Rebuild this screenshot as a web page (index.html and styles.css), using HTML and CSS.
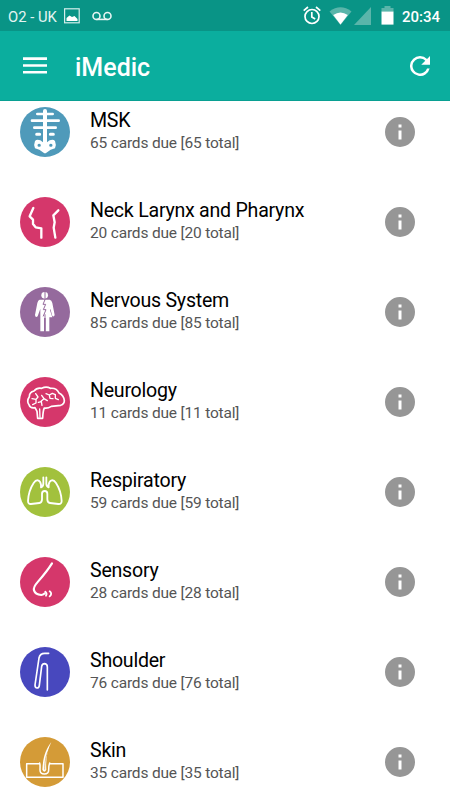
FILE: index.html
```html
<!DOCTYPE html>
<html lang="en">
<head>
    <meta charset="UTF-8">
    <meta name="viewport" content="width=device-width, initial-scale=1.0">
    <title>iMedic</title>
    <link rel="stylesheet" href="styles.css">
</head>
<body>
    <div class="status-bar">
        <span class="carrier">O2 - UK</span>
        <svg class="picture" width="16" height="16" viewBox="0 0 16 16">
            <rect x="0.6" y="0.8" width="14.6" height="14" fill="none" stroke="#d5eeeb" stroke-width="1.2"/>
            <path d="M2.5 13V10L5.5 7.5L8 9L10.5 8L13.5 11V13Z" fill="#fff"/>
        </svg>
        <svg class="voicemail" width="20" height="10" viewBox="0 0 20 10">
            <path d="M4.5 8.4H15.5" stroke="#e6f5f3" stroke-width="1.6"/>
            <circle cx="4.5" cy="5" r="3.5" fill="none" stroke="#e6f5f3" stroke-width="1.6"/>
            <circle cx="15.5" cy="5" r="3.5" fill="none" stroke="#e6f5f3" stroke-width="1.6"/>
        </svg>
        <svg class="alarm" width="18" height="19" viewBox="0 0 18 19">
            <g fill="none" stroke="#fff" stroke-width="1.7">
                <circle cx="9" cy="10.5" r="7"/>
                <path d="M0.7 4.6L5 1M17.3 4.6L13 1M8.8 6V11L12.2 13"/>
            </g>
        </svg>
        <svg class="wifi" width="23" height="18" viewBox="0 0 23 18">
            <path d="M0.5 4.5Q11.5 -3.8 22.5 4.5L11.5 18Z" fill="#5ab5aa"/>
            <path d="M4.2 8Q11.5 2.8 18.8 8L11.5 17.6Z" fill="#fff"/>
        </svg>
        <svg class="signal" width="17" height="18" viewBox="0 0 17 18">
            <path d="M17 0V18H0Z" fill="#5ab5aa"/>
        </svg>
        <svg class="battery" width="13" height="19" viewBox="0 0 13 19">
            <path d="M0.5 2H3.5V0H9.5V2H12.5V6H0.5Z" fill="#5ab5aa"/>
            <rect x="0.5" y="5.6" width="12" height="13" fill="#fff"/>
        </svg>
        <span class="clock">20:34</span>
    </div>
    <header>
        <svg class="menu" width="24" height="17" viewBox="0 0 24 17">
            <path d="M0 1.6H24M0 8.5H24M0 15.2H24" stroke="#fff" stroke-width="2.6"/>
        </svg>
        <h1>iMedic</h1>
        <svg class="refresh" width="20" height="20" viewBox="4 4 16 16">
            <path d="M17.65 6.35A7.96 7.96 0 0 0 12 4a8 8 0 1 0 7.73 10h-2.08A6 6 0 1 1 12 6c1.66 0 3.14.69 4.22 1.78L13 11h7V4z" fill="#fff"/>
        </svg>
    </header>
    <main>
        <div class="card">
            <svg class="icon msk" viewBox="30 20 150 150">
                <path d="M105 32V130" stroke-width="12"/>
                <path d="M82 41H128M66 61H146M73 82H137" stroke-width="8"/>
                <path d="M80 102H89M121 102H130" stroke-width="9"/>
                <path class="solid" d="M75 122Q80 116 91 120L105 130L119 120Q130 116 135 122Q140 134 135 144L122 148L107 159H103L88 148L75 144Q70 134 75 122Z"/>
                <path class="cut" d="M87 135H88M122 135H123"/>
            </svg>
            <div class="text"><h2>MSK</h2><p>65 cards due [65 total]</p></div>
            <svg class="info" viewBox="2 2 20 20"><path d="M12 2a10 10 0 1 0 0 20a10 10 0 0 0 0-20zm1 15h-2v-6h2zm0-8h-2V7h2z"/></svg>
        </div>
        <div class="card">
            <svg class="icon neck" viewBox="30 20 150 150">
                <path d="M70 53L59 78L69 88V101L77 111L94 114V142M145 60L130 75L134 96L131 112L136 142" stroke-width="7"/>
            </svg>
            <div class="text"><h2>Neck Larynx and Pharynx</h2><p>20 cards due [20 total]</p></div>
            <svg class="info" viewBox="2 2 20 20"><path d="M12 2a10 10 0 1 0 0 20a10 10 0 0 0 0-20zm1 15h-2v-6h2zm0-8h-2V7h2z"/></svg>
        </div>
        <div class="card">
            <svg class="icon nervous" viewBox="30 20 150 150">
                <circle class="solid" cx="104" cy="45" r="10"/>
                <path class="solid" d="M89 58H119Q125 59 127 68L134 104Q132 111 127 107L121 85L120 90L127 111H118V153H107V113H102V153H91V85L83 108Q76 113 75 104L82 68Q84 59 89 58Z"/>
                <path class="cut" d="M105 33V58L99 72H107L100 88H108L100 107M105 103V153"/>
            </svg>
            <div class="text"><h2>Nervous System</h2><p>85 cards due [85 total]</p></div>
            <svg class="info" viewBox="2 2 20 20"><path d="M12 2a10 10 0 1 0 0 20a10 10 0 0 0 0-20zm1 15h-2v-6h2zm0-8h-2V7h2z"/></svg>
        </div>
        <div class="card">
            <svg class="icon neuro" viewBox="30 20 150 150">
                <path d="M83 144L81 123L75 112Q61 115 57 103Q49 92 58 79Q58 65 72 62Q81 51 95 54Q109 47 121 54Q140 52 147 68Q162 76 163 91Q163 101 152 105L124 108Q113 115 103 113Q99 120 98 144Z" stroke-width="5"/>
                <path d="M90 141L89 116M66 85L78 87L84 80L77 70M78 87V98L68 103M85 96L94 94L96 105M93 93L102 85L95 75M102 85L112 91M108 70L118 74L120 84L129 85M118 74L127 69L136 73M136 73V84L145 88" stroke-width="4"/>
            </svg>
            <div class="text"><h2>Neurology</h2><p>11 cards due [11 total]</p></div>
            <svg class="info" viewBox="2 2 20 20"><path d="M12 2a10 10 0 1 0 0 20a10 10 0 0 0 0-20zm1 15h-2v-6h2zm0-8h-2V7h2z"/></svg>
        </div>
        <div class="card">
            <svg class="icon resp" viewBox="30 20 150 150">
                <path d="M100 51V70Q100 78 93 81V73C90 57 79 56 71 68C61 83 55 102 54 122Q54 132 63 131L88 128Q96 127 96 117V100Q96 92 104 92Q112 92 112 100V117Q112 127 120 128L145 131Q155 132 155 122C154 102 148 83 138 68C130 56 119 57 116 73V81Q109 78 109 70V51" stroke-width="5.5"/>
            </svg>
            <div class="text"><h2>Respiratory</h2><p>59 cards due [59 total]</p></div>
            <svg class="info" viewBox="2 2 20 20"><path d="M12 2a10 10 0 1 0 0 20a10 10 0 0 0 0-20zm1 15h-2v-6h2zm0-8h-2V7h2z"/></svg>
        </div>
        <div class="card">
            <svg class="icon sensory" viewBox="30 20 150 150">
                <path d="M126 39C116 55 103 72 84 94C76 103 69 111 72 120C75 130 84 133 94 134Q101 133 104 129" stroke-width="6.5"/>
                <path d="M106 124Q112 129 108 136M119 123Q128 130 119 138" stroke-width="5.5"/>
            </svg>
            <div class="text"><h2>Sensory</h2><p>28 cards due [28 total]</p></div>
            <svg class="info" viewBox="2 2 20 20"><path d="M12 2a10 10 0 1 0 0 20a10 10 0 0 0 0-20zm1 15h-2v-6h2zm0-8h-2V7h2z"/></svg>
        </div>
        <div class="card">
            <svg class="icon shoulder" viewBox="30 20 150 150">
                <path d="M116 39H106Q90 38 87 53L75 134Q75 143 81 143Q87 143 88 135L95 78Q97 70 104 70Q112 71 112 80V149" stroke-width="5"/>
            </svg>
            <div class="text"><h2>Shoulder</h2><p>76 cards due [76 total]</p></div>
            <svg class="info" viewBox="2 2 20 20"><path d="M12 2a10 10 0 1 0 0 20a10 10 0 0 0 0-20zm1 15h-2v-6h2zm0-8h-2V7h2z"/></svg>
        </div>
        <div class="card">
            <svg class="icon skin" viewBox="30 20 150 150">
                <path d="M89 100H50V141H159V100H119M89 98C91 105 90 110 90 119C90 135 116 135 116 119C116 110 116 105 119 98" stroke-width="4.5"/>
                <path class="solid" d="M124 35C108 55 99 80 97 118Q103 130 109 118C107 90 111 61 124 35Z"/>
                <path class="cut" d="M117 57C106 78 104 98 104 117"/>
            </svg>
            <div class="text"><h2>Skin</h2><p>35 cards due [35 total]</p></div>
            <svg class="info" viewBox="2 2 20 20"><path d="M12 2a10 10 0 1 0 0 20a10 10 0 0 0 0-20zm1 15h-2v-6h2zm0-8h-2V7h2z"/></svg>
        </div>
    </main>
</body>
</html>
```
FILE: styles.css
```css
body {
    font-family: Roboto, sans-serif;
    margin: 0;
    height: 800px;
    overflow: hidden;
    background-color: #fff;
}
/* Status bar */
.status-bar {
    display: flex;
    align-items: center;
    box-sizing: border-box;
    height: 31px;
    padding: 0 10px 0 8px;
    background-color: #099486;
    color: #fff;
}
.carrier {
    font-size: 14.8px;
    color: #e4f4f2;
    width: 56px;
    padding-top: 2px;
    white-space: nowrap;
}
.voicemail {
    margin-left: 12px;
}
.alarm {
    margin-left: auto;
}
.wifi {
    margin-left: 8px;
}
.signal {
    margin-left: 2px;
}
.battery {
    margin-left: 10px;
}
.clock {
    font-size: 15px;
    font-weight: 500;
    width: 38px;
    margin-left: 8px;
    padding-top: 2px;
}
/* App bar */
header {
    display: flex;
    align-items: center;
    box-sizing: border-box;
    height: 70px;
    padding: 0 20px 0 23px;
    background-color: #0bae9e;
    border-bottom: 1px solid #09a092;
    color: #fff;
}
h1 {
    flex: 1;
    margin: 0 0 0 28px;
    padding-top: 3px;
    font-size: 25px;
    font-weight: 500;
}
/* Card list */
main {
    display: flex;
    flex-direction: column;
    gap: 40px;
    padding: 5.6px 35px 0 20px;
}
.card {
    display: flex;
    align-items: center;
    height: 50px;
}
.icon {
    width: 50px;
    height: 50px;
    border-radius: 50%;
    fill: none;
    stroke: #fff;
    stroke-linecap: round;
    stroke-linejoin: round;
}
.icon .solid {
    fill: #fff;
    stroke: none;
}
.icon .cut {
    stroke-width: 3;
}
.msk {
    background-color: #4f9aba;
}
.msk .cut {
    stroke: #4f9aba;
    stroke-width: 9;
}
.neck,
.neuro,
.sensory {
    background-color: #d5376b;
}
.nervous {
    background-color: #956a9d;
}
.nervous .cut {
    stroke: #956a9d;
}
.resp {
    background-color: #a2c13d;
}
.shoulder {
    background-color: #4848be;
}
.skin {
    background-color: #d49b37;
}
.skin .cut {
    stroke: #d49b37;
    stroke-width: 2;
}
.text {
    flex: 1;
    margin-left: 20px;
    padding-bottom: 2px;
}
h2 {
    margin: 0 0 -1px;
    padding-top: 1px;
    font-size: 19.6px;
    font-weight: 400;
    line-height: 24px;
    letter-spacing: -0.25px;
    color: #000;
}
p {
    margin: 0;
    font-size: 15.5px;
    line-height: 22px;
    letter-spacing: -0.18px;
    color: #555;
}
.info {
    width: 30px;
    height: 30px;
    fill: #969696;
}
```
